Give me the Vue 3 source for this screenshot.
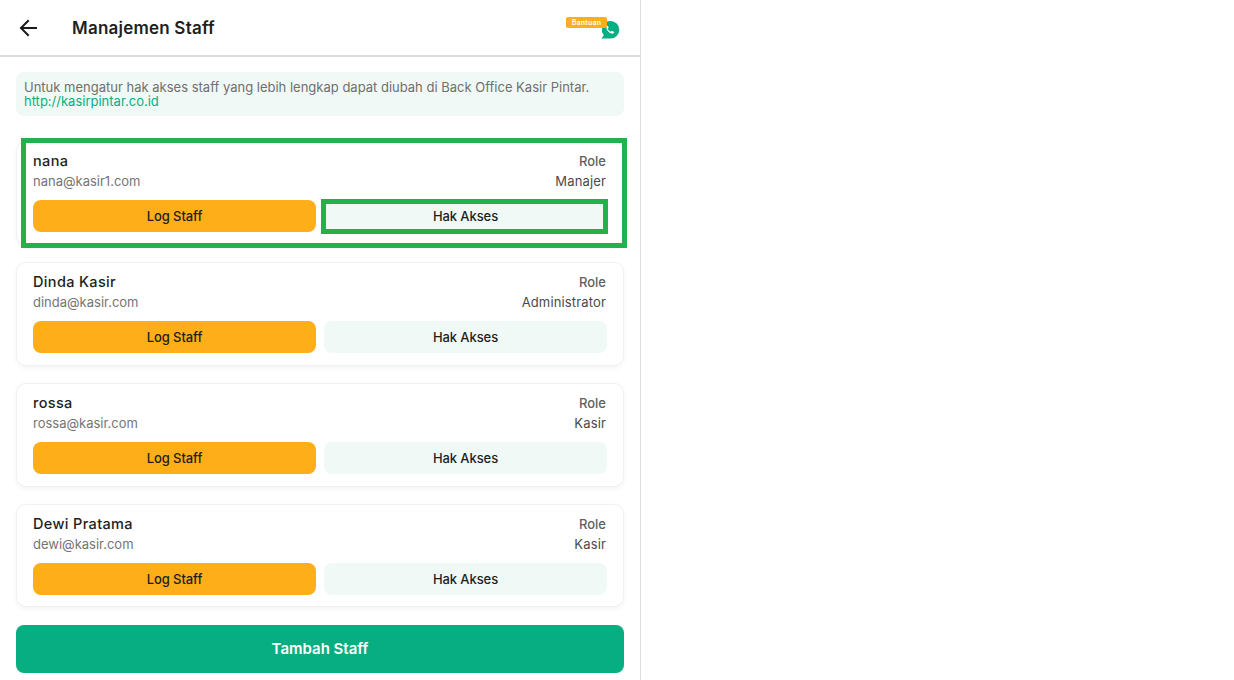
<script setup>
const staff = [
  { name: 'nana', email: 'nana@kasir1.com', role: 'Manajer' },
  { name: 'Dinda Kasir', email: 'dinda@kasir.com', role: 'Administrator' },
  { name: 'rossa', email: 'rossa@kasir.com', role: 'Kasir' },
  { name: 'Dewi Pratama', email: 'dewi@kasir.com', role: 'Kasir' },
]
</script>

<template>
  <div class="panel">
    <header class="topbar">
      <svg class="back" width="24" height="24" viewBox="0 0 24 24" fill="none" stroke="#1b1b1b" stroke-width="2" stroke-linecap="square">
        <path d="M20 12H5.5" />
        <path d="M12 5l-7 7 7 7" />
      </svg>
      <h1 class="title">Manajemen Staff</h1>
      <div class="help">
        <svg class="wa" width="20" height="20" viewBox="0 0 20 20">
          <path d="M10.500 1a8.800 8.800 0 1 1 0 17.600H1.500l2.300-3.400A8.800 8.800 0 0 1 10.500 1z" fill="#07ae82" />
          <path d="M7.500 5.800c-.7.3-1.200 1.100-1.100 2 .3 2.800 2.900 5.400 5.700 5.900 1 .1 1.800-.4 2-1.100.1-.3 0-.6-.2-.8l-1.700-.9c-.3-.1-.5 0-.7.2l-.6.700c-1.700-.7-2.600-1.700-3.200-3.100l.7-.7c.2-.2.200-.4.100-.7l-.9-1.500c-.2-.2-.6-.2-.1 0z" fill="#fff" />
        </svg>
        <span class="badge">Bantuan</span>
      </div>
    </header>

    <div class="content">
      <div class="notice">
        Untuk mengatur hak akses staff yang lebih lengkap dapat diubah di Back Office Kasir Pintar.<br />
        <span class="link">http://kasirpintar.co.id</span>
      </div>

      <div class="list">
        <article v-for="(person, i) in staff" :key="person.email" class="card">
          <div class="row name-row">
            <span class="name">{{ person.name }}</span>
            <span class="role-label">Role</span>
          </div>
          <div class="row mail-row">
            <span class="email">{{ person.email }}</span>
            <span class="role">{{ person.role }}</span>
          </div>
          <div class="actions">
            <button class="btn log">Log Staff</button>
            <button class="btn access">
              Hak Akses
              <span v-if="i === 0" class="mark mark-inner"></span>
            </button>
          </div>
          <span v-if="i === 0" class="mark mark-outer"></span>
        </article>
      </div>

      <button class="add">Tambah Staff</button>
    </div>
  </div>
</template>

<style>
html, body { margin: 0; background: #fff; }
</style>

<style scoped>
.panel {
  width: 641px;
  height: 680px;
  box-sizing: border-box;
  border-right: 1px solid #dcdcdc;
  font-family: Inter, "Noto Sans", sans-serif;
  overflow: hidden;
  background: #fff;
}
.topbar {
  height: 57px;
  box-sizing: border-box;
  border-bottom: 2px solid #dcdcdc;
  display: flex;
  align-items: center;
  padding: 0 20px 0 16px;
}
.back { flex: none; }
.title {
  margin: 0 0 0 32px;
  font-size: 17px;
  font-weight: 600;
  color: #1e1e1e;
  letter-spacing: 0.22px;
  flex: 1;
}
.help {
  position: relative;
  width: 20px;
  height: 20px;
  margin-top: 5px;
}
.badge {
  position: absolute;
  right: 13px;
  top: -3px;
  width: 41px;
  height: 11px;
  border-radius: 2px;
  background: #fdae19;
  color: #fff;
  font-size: 7px;
  line-height: 11px;
  text-align: center;
  font-weight: 600;
  letter-spacing: 0.2px;
}
.content {
  padding: 15px 16px 0;
}
.notice {
  height: 44px;
  box-sizing: border-box;
  padding: 8px 8px 0;
  border-radius: 8px;
  background: #f0f9f6;
  color: #6f6f6f;
  font-size: 13px;
  line-height: 14px;
  white-space: nowrap;
}
.link { color: #07ae82; }
.list {
  margin-top: 25px;
  display: flex;
  flex-direction: column;
  gap: 17px;
}
.card {
  position: relative;
  height: 103.850px;
  box-sizing: border-box;
  padding: 9px 17px 0;
  border-radius: 10px;
  border: 1px solid #f1f1f1;
  box-shadow: 0 2px 5px rgba(0, 0, 0, 0.05);
  background: #fff;
}
.card > * { margin-left: -1px; margin-right: -1px; }
.row {
  display: flex;
  justify-content: space-between;
  align-items: center;
  height: 20px;
  padding-right: 1px;
}
.name {
  font-size: 14.500px;
  font-weight: 500;
  color: #1e1e1e;
  letter-spacing: 0.35px;
  margin-bottom: 1px;
}
.role-label {
  font-size: 13px;
  font-weight: 500;
  color: #5f5f5f;
}
.email {
  font-size: 13px;
  color: #757575;
}
.role {
  font-size: 13px;
  color: #4a4a4a;
  letter-spacing: 0.15px;
}
.actions {
  margin-top: 9px;
  display: grid;
  grid-template-columns: 1fr 1fr;
  gap: 8px;
}
.btn {
  position: relative;
  height: 32px;
  border: 0;
  border-radius: 8px;
  font-family: inherit;
  font-size: 13px;
  font-weight: 500;
  color: #1e1e1e;
  padding: 0;
  letter-spacing: -0.08px;
}
.log { background: #fdae19; }
.access { background: #f0f9f6; }
.add {
  display: block;
  width: 100%;
  height: 48px;
  margin-top: 17.600px;
  border: 0;
  border-radius: 8px;
  background: #07ae82;
  color: #fff;
  font-family: inherit;
  font-size: 15px;
  font-weight: 600;
  padding: 0 0 1px;
}
.mark {
  position: absolute;
  box-sizing: border-box;
  pointer-events: none;
  margin: 0;
}
.mark-outer {
  left: 4px;
  top: -4px;
  width: 606px;
  height: 110px;
  border: 5px solid #22b14c;
}
.mark-inner {
  left: -3px;
  top: -1px;
  width: 287px;
  height: 35px;
  border: 5px solid #22b14c;
}
</style>
